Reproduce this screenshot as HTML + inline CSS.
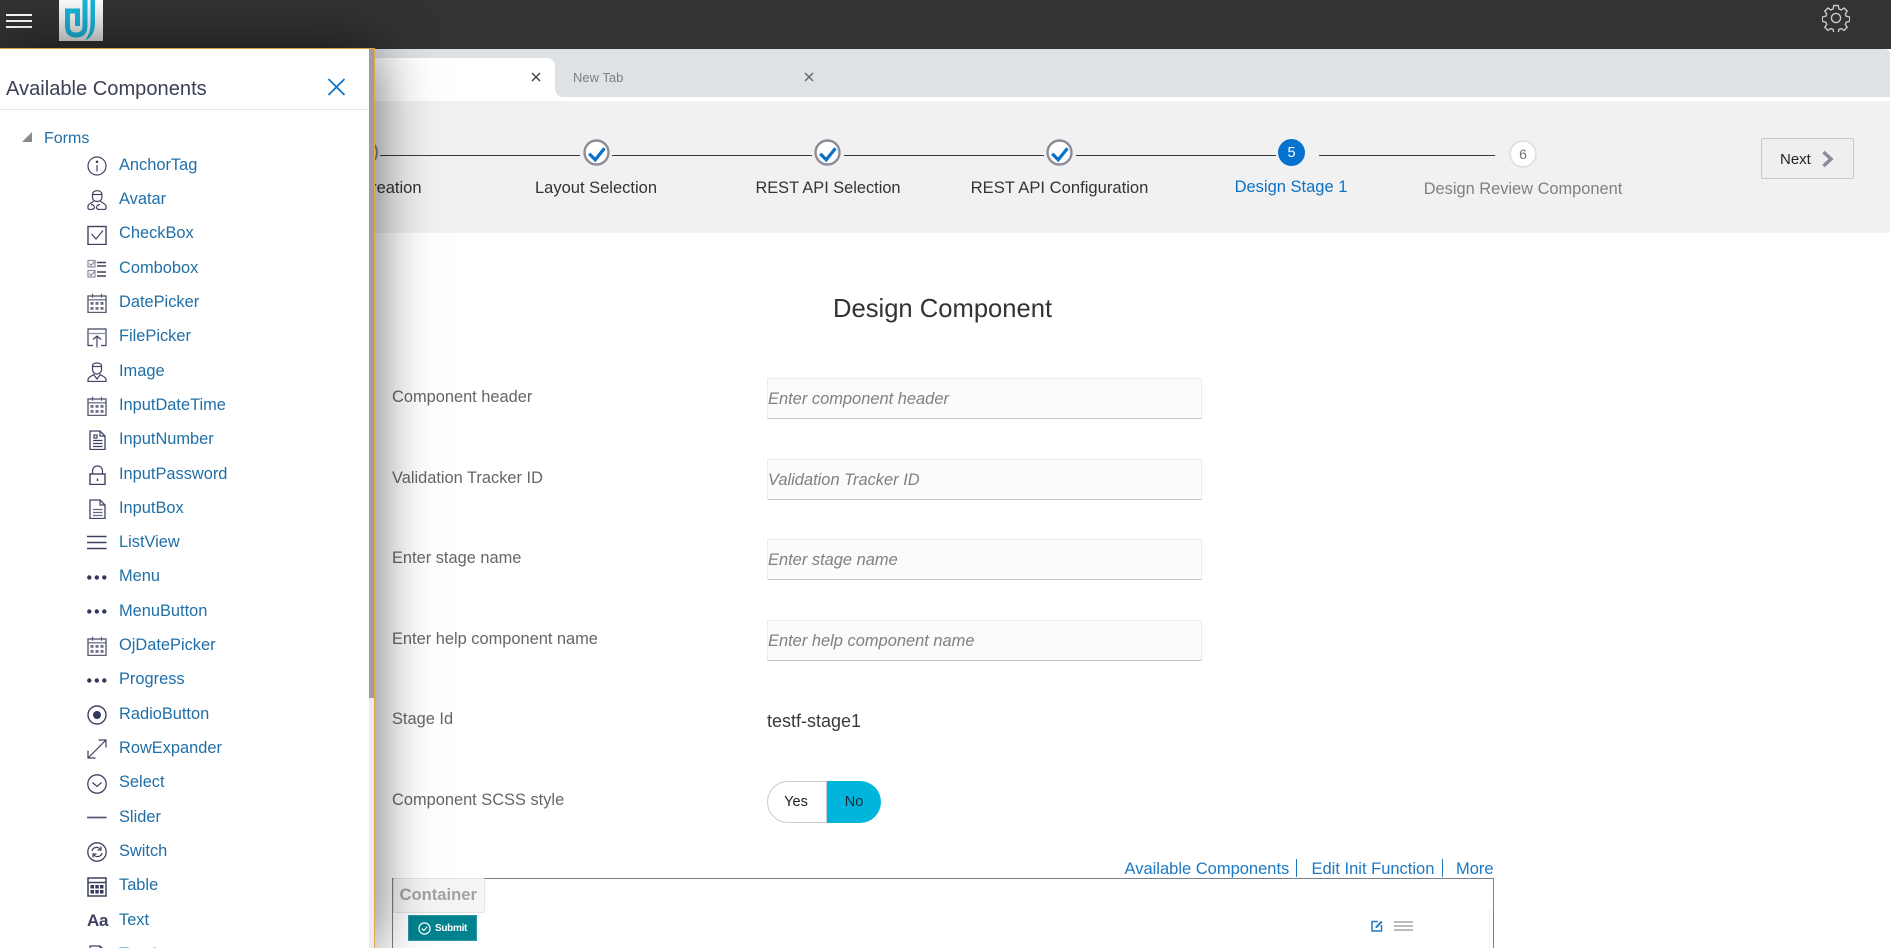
<!DOCTYPE html>
<html>
<head>
<meta charset="utf-8">
<title>Design Component</title>
<style>
html,body{margin:0;padding:0;background:#fff;width:1891px;height:948px;overflow:hidden;}
#page{width:1891px;height:948px;overflow:hidden;position:relative;font-family:"Liberation Sans",Arial,sans-serif;color:#333;}
.a{position:absolute;white-space:nowrap;}
.topbar{left:0;top:0;width:1891px;height:49px;background:#333;}
.tabbar{left:0;top:49px;width:1890px;height:48px;background:#dee1e6;border-top-right-radius:5px;}
.band{left:0;top:101px;width:1890px;height:132px;background:#f1f1f1;}
.line{height:1.4px;background:#3a3a3a;top:154.5px;}
.chk{width:27px;height:27px;top:138.5px;}
.lbl{font-size:16.5px;line-height:20px;transform:translateX(-50%);color:#333;}
.flabel{left:392px;font-size:16.4px;line-height:20px;color:#666;transform:translateY(-50%);}
.inp{left:767px;width:433px;height:39px;background:#fbfbfb;border:1px solid #ebebeb;border-bottom:1.5px solid #c6c6c6;}
.ph{left:768px;font-size:16.45px;font-style:italic;color:#808080;line-height:20px;transform:translateY(-50%);}
.link{color:#1b78c4;font-size:16.5px;line-height:20px;top:858.5px;}
.side{left:0;top:48px;width:375px;height:900px;background:#fff;border-top:1.5px solid #e2a03a;box-shadow:0 0 55px rgba(0,0,0,.6);z-index:10;overflow:hidden;}
.items{position:absolute;left:0;top:98.7px;margin:0;padding:0;list-style:none;width:369px;}
.items li{height:34.32px;line-height:34.32px;font-size:16.4px;color:#1f6fa6;position:relative;padding-left:119px;}
.items svg{position:absolute;left:87px;top:8.3px;width:20px;height:20px;fill:none;stroke:#3d4260;stroke-width:1.2;}
.aa{position:absolute;left:87px;top:1px;font-size:17px;font-weight:bold;color:#3d4260;letter-spacing:-.3px;line-height:34.32px;}
</style>
</head>
<body>
<div id="page">
<svg width="0" height="0" style="position:absolute">
<defs>
<symbol id="info" viewBox="0 0 20 20"><circle cx="10" cy="10" r="9"/><path d="M10 9v6.500"/><circle cx="10" cy="5.800" r=".7"/></symbol>
<symbol id="avatar" viewBox="0 0 20 20"><path d="M5.500 4.500c0-2.400 2-3.800 4.700-3.800s4.700 1.400 4.700 3.800v3c0 2.200-2 4-4.700 4s-4.700-1.800-4.700-4z"/><path d="M5.500 4.500h9.400"/><path d="M6.500 11c-.5 1.800-5 2.200-5.500 5v2c0 1 1 1.500 2.500 1.500s4-.5 4-2-1.500-3-3.500-3"/><path d="M13.500 11c.5 1.800 5 2.200 5.500 5v2c0 1-1 1.500-2.500 1.500h-3.500c-1.500 0-3.500-.5-3.500-2s1.500-3 3.500-3"/></symbol>
<symbol id="checkbox" viewBox="0 0 20 20"><rect x="1" y="1.500" width="18" height="18" stroke-width="1.400"/><path d="M4.500 9l4.500 5L16 5.500"/></symbol>
<symbol id="combo" viewBox="0 0 20 20"><g stroke="#8b8e9c"><rect x="1" y="1.500" width="7" height="6.500"/><rect x="1" y="11.500" width="7" height="6.500"/><path d="M2.500 4.500l1.500 2 4-4.500M2.500 14.500l1.500 2 4-4.500"/></g><path d="M10 3.500h9M10 7h9M10 13h9M10 17h9" stroke-width="1.400"/></symbol>
<symbol id="cal" viewBox="0 0 20 20"><rect x="1" y="3" width="18" height="16.500" stroke="#5a5e75" stroke-width="1.400"/><path d="M1 6.800h18M5.500 .8v4M14.500 .8v4" stroke="#5a5e75" stroke-width="1.200"/><g fill="#6a6e84" stroke="none"><rect x="3.500" y="9" width="3" height="2.800"/><rect x="8.500" y="9" width="3" height="2.800"/><rect x="13.500" y="9" width="3" height="2.800"/><rect x="3.500" y="14" width="3" height="2.800"/><rect x="8.500" y="14" width="3" height="2.800"/><rect x="13.500" y="14" width="3" height="2.800"/></g></symbol>
<symbol id="file" viewBox="0 0 20 20"><path d="M6 17.500H1V1h18v16.500h-5"/><path d="M1 5.500h18" stroke="#8b8e9c"/><path d="M10 19.500V8M6 11.500L10 8l4 3.500"/></symbol>
<symbol id="image" viewBox="0 0 20 20"><path d="M5.500 4c0-2 2-3 4.500-3s4.500 1 4.500 3v3.500c0 2.500-2 4.500-4.500 4.500s-4.500-2-4.500-4.500z"/><path d="M5.500 4.500h9"/><path d="M7 12c-.5 2-5.500 2-6 5.500v2h18v-2c-.5-3.500-5.500-3.500-6-5.500"/><path d="M7 13l3 4 3-4"/></symbol>
<symbol id="num" viewBox="0 0 20 20"><path d="M3 1h10l5 5v13.500H3z" stroke-width="1.300"/><path d="M13 1v5h5"/><rect x="7" y="5" width="3" height="3"/><path d="M6 10.500h9.500M6 13.500h9.500M6 16.500h9.500"/></symbol>
<symbol id="lock" viewBox="0 0 20 20"><rect x="3" y="9" width="15" height="10.500" stroke-width="1.400"/><path d="M5.500 9V6.500C5.500 3 7.500 1 10.500 1s5 2 5 5.500V9"/><path d="M10.500 13.500v2.500" stroke-width="1.500"/></symbol>
<symbol id="doc" viewBox="0 0 20 20"><path d="M3 1h10l5 5v13.500H3z" stroke-width="1.300"/><path d="M13 1v5h5"/><path d="M6 10.500h9.500M6 13.500h9.500M6 16.500h9.500" stroke="#666a80"/></symbol>
<symbol id="list" viewBox="0 0 20 20"><path d="M0 3.500h19.500M0 9.500h19.500M0 15.500h19.500" stroke-width="1.400"/></symbol>
<symbol id="dots" viewBox="0 0 20 20"><g fill="#33385a" stroke="none"><circle cx="2.300" cy="9.500" r="2.200"/><circle cx="9.800" cy="9.500" r="2.200"/><circle cx="17.300" cy="9.500" r="2.200"/></g></symbol>
<symbol id="radio" viewBox="0 0 20 20"><circle cx="10" cy="10" r="9" stroke-width="1.400"/><circle cx="10" cy="10" r="4" fill="#33385a" stroke="none"/></symbol>
<symbol id="exp" viewBox="0 0 20 20"><path d="M1 19L18.500 1.500M11.500 1h7.500v7.500M1 11.500V19h7.500"/></symbol>
<symbol id="sel" viewBox="0 0 20 20"><circle cx="10" cy="10" r="9.200" stroke-width="1.300"/><path d="M5.500 8.500l4.500 4 4.500-4"/></symbol>
<symbol id="sld" viewBox="0 0 20 20"><path d="M0 9.500h19.500" stroke="#555a75" stroke-width="1.800"/></symbol>
<symbol id="sw" viewBox="0 0 20 20"><circle cx="10" cy="10" r="9.200" stroke-width="1.300"/><path d="M5 9c.5-3 4-4.500 7-3l1.500 1.500M15 11c-.5 3-4 4.500-7 3l-1.500-1.500"/><path d="M14 4.500v3.500h-3.500M6 15.500V12h3.500"/></symbol>
<symbol id="tbl" viewBox="0 0 20 20"><rect x="1" y="1" width="18" height="18" stroke-width="1.500"/><path d="M1 5.500h18" stroke-width="1.500"/><g fill="#33385a" stroke="none"><rect x="3.500" y="8" width="3.500" height="3.500"/><rect x="8.300" y="8" width="3.500" height="3.500"/><rect x="13" y="8" width="3.500" height="3.500"/><rect x="3.500" y="13" width="3.500" height="3.500"/><rect x="8.300" y="13" width="3.500" height="3.500"/><rect x="13" y="13" width="3.500" height="3.500"/></g></symbol>
</defs>
</svg>

<div class="a topbar"></div>
<!-- hamburger -->
<div class="a" style="left:5.500px;top:13.500px;width:26px;height:2.300px;background:#fff"></div>
<div class="a" style="left:5.500px;top:19.500px;width:26px;height:2.300px;background:#fff"></div>
<div class="a" style="left:5.500px;top:26px;width:26px;height:2.300px;background:#fff"></div>
<!-- logo -->
<svg class="a" style="left:59px;top:0" width="44" height="41" viewBox="59 0 44 41">
<defs><linearGradient id="lg" x1="0" y1="0" x2="0" y2="1"><stop offset="0" stop-color="#fff"/><stop offset="1" stop-color="#e6e6e6"/></linearGradient></defs>
<rect x="59" y="0" width="44" height="41" fill="url(#lg)"/>
<path d="M77.500 26V11H67.500V26Q67.500 35 76 35Q85 35 85 26V0" fill="none" stroke="#19b5dc" stroke-width="5"/>
<path d="M90.500 0h4.500V23C95 32 91 38 85 40.500 89 35 90.500 30 90.500 23z" fill="#19b5dc"/>
</svg>
<!-- gear -->
<svg class="a" style="left:1822px;top:4px" width="28" height="28" viewBox="0 0 28 28" fill="none" stroke="#c9c9c9" stroke-width="1.400">
<circle cx="14" cy="14" r="4.600"/>
<path d="M11.800 1.500h4.400l.7 3.400 2.300 1 2.900-1.900 3.100 3.100-1.900 2.900 1 2.300 3.400.7v4.400l-3.400.7-1 2.300 1.900 2.900-3.100 3.100-2.900-1.900-2.300 1-.7 3.400h-4.400l-.7-3.400-2.300-1-2.900 1.900-3.100-3.100 1.900-2.900-1-2.300-3.400-.7v-4.400l3.400-.7 1-2.300-1.900-2.900 3.100-3.100 2.900 1.900 2.300-1z"/>
</svg>

<!-- tabs -->
<div class="a tabbar"></div>
<div class="a" style="left:300px;top:58px;width:255px;height:39px;background:#fff;border-top-right-radius:8px"></div>
<div class="a" style="left:555px;top:87px;width:12px;height:10px;background:#fff"></div>
<div class="a" style="left:555px;top:87px;width:12px;height:10px;background:#dee1e6;border-bottom-left-radius:8px"></div>
<svg class="a" style="left:531px;top:72px" width="10" height="10" viewBox="0 0 10 10"><path d="M1 1l8 8M9 1l-8 8" stroke="#444" stroke-width="1.400"/></svg>
<div class="a" style="left:573px;top:70px;font-size:13px;line-height:16px;color:#808080">New Tab</div>
<svg class="a" style="left:804px;top:72px" width="10" height="10" viewBox="0 0 10 10"><path d="M1 1l8 8M9 1l-8 8" stroke="#666" stroke-width="1.400"/></svg>

<!-- stepper -->
<div class="a band"></div>
<div class="a" style="left:340px;top:138.500px;width:39px;height:27px;overflow:hidden"><div style="position:absolute;left:11px;top:0;width:27px;height:27px;box-sizing:border-box;border:2.500px solid #8a8d97;border-radius:50%;background:#fff"></div></div>
<div class="a line" style="left:380px;width:200px"></div>
<div class="a line" style="left:612px;width:200px"></div>
<div class="a line" style="left:844px;width:200px"></div>
<div class="a line" style="left:1076px;width:200px"></div>
<div class="a line" style="left:1319px;width:176px"></div>

<svg class="a chk" style="left:582.500px" viewBox="0 0 27 27"><circle cx="13.500" cy="13.500" r="12" fill="#fff" stroke="#8a8d97" stroke-width="2.400"/><path d="M6.200 14.800l6 6 9.300-11.600" fill="none" stroke="#0a72c6" stroke-width="3.200"/></svg>
<svg class="a chk" style="left:814px" viewBox="0 0 27 27"><circle cx="13.500" cy="13.500" r="12" fill="#fff" stroke="#8a8d97" stroke-width="2.400"/><path d="M6.200 14.800l6 6 9.300-11.600" fill="none" stroke="#0a72c6" stroke-width="3.200"/></svg>
<svg class="a chk" style="left:1046px" viewBox="0 0 27 27"><circle cx="13.500" cy="13.500" r="12" fill="#fff" stroke="#8a8d97" stroke-width="2.400"/><path d="M6.200 14.800l6 6 9.300-11.600" fill="none" stroke="#0a72c6" stroke-width="3.200"/></svg>
<div class="a" style="left:1278px;top:139px;width:27px;height:27px;border-radius:50%;background:#0572ce;color:#fff;text-align:center;font-size:14.500px;line-height:28.500px">5</div>
<div class="a" style="left:1509px;top:139.500px;width:24px;height:24px;border:2px solid #e2e2e2;border-radius:50%;background:#fff;color:#777;text-align:center;font-size:14px;line-height:24px">6</div>

<div class="a lbl" style="left:366.500px;top:177.500px"><span>Stage Creation</span></div>
<div class="a lbl" style="left:596px;top:177.500px">Layout Selection</div>
<div class="a lbl" style="left:828px;top:177.500px;font-size:16.350px">REST API Selection</div>
<div class="a lbl" style="left:1059.500px;top:177.500px;font-size:16.600px">REST API Configuration</div>
<div class="a lbl" style="left:1291px;top:177px;color:#0a72c6">Design Stage 1</div>
<div class="a lbl" style="left:1523px;top:178.500px;color:#808080;font-size:16.400px">Design Review Component</div>

<!-- next -->
<div class="a" style="left:1761px;top:138px;width:91px;height:39px;border:1px solid #c8c8c8;border-radius:2px;background:#efefef"></div>
<div class="a" style="left:1780px;top:150.500px;font-size:15px;line-height:18px;color:#222">Next</div>
<svg class="a" style="left:1821px;top:150px" width="14" height="18" viewBox="0 0 14 18"><path d="M2.500 2L10 9 2.500 16" fill="none" stroke="#8a8d97" stroke-width="3.500"/></svg>

<!-- form -->
<div class="a" style="left:833px;top:292.500px;font-size:25.600px;line-height:33px;color:#333">Design Component</div>

<div class="a flabel" style="top:396.700px">Component header</div>
<div class="a flabel" style="top:477.500px">Validation Tracker ID</div>
<div class="a flabel" style="top:557.700px">Enter stage name</div>
<div class="a flabel" style="top:638.700px">Enter help component name</div>
<div class="a flabel" style="top:718.700px">Stage Id</div>
<div class="a flabel" style="top:800px">Component SCSS style</div>

<div class="a inp" style="top:378px"></div>
<div class="a inp" style="top:459px"></div>
<div class="a inp" style="top:539px"></div>
<div class="a inp" style="top:620px"></div>
<div class="a ph" style="top:398.500px">Enter component header</div>
<div class="a ph" style="top:479.500px">Validation Tracker ID</div>
<div class="a ph" style="top:559.500px">Enter stage name</div>
<div class="a ph" style="top:640.500px">Enter help component name</div>

<div class="a" style="left:767px;top:709.500px;font-size:18px;line-height:22px;color:#3a3a3a">testf-stage1</div>

<div class="a" style="left:767px;top:781px;width:56px;height:40px;padding-right:2px;border:1px solid #ccc;border-radius:21px 0 0 21px;background:#fff;text-align:center;font-size:14.500px;line-height:41.500px;color:#222">Yes</div>
<div class="a" style="left:827px;top:781px;width:54px;height:42px;border-radius:0 21px 21px 0;background:#00b5dc;text-align:center;font-size:14.500px;line-height:42.500px;color:#1b2b3a">No</div>

<!-- links -->
<div class="a link" style="left:1124.500px">Available Components</div>
<div class="a" style="left:1296px;top:859px;width:1px;height:18px;background:#1b78c4"></div>
<div class="a link" style="left:1311.500px">Edit Init Function</div>
<div class="a" style="left:1442px;top:859px;width:1px;height:18px;background:#1b78c4"></div>
<div class="a link" style="left:1456px">More</div>

<!-- container -->
<div class="a" style="left:392px;top:878px;width:1100px;height:100px;border:1px solid #7a7f8c"></div>
<div class="a" style="left:392.500px;top:878px;width:90px;height:33px;background:#f5f5f5;border:1px solid #e4e4e4;border-radius:2px"></div>
<div class="a" style="left:399.500px;top:885px;font-size:16.600px;font-weight:bold;line-height:20px;color:#a3a3a3">Container</div>
<div class="a" style="left:408px;top:915px;width:67px;height:24px;background:#00838f;border:1px solid #2a96a2"></div>
<svg class="a" style="left:418px;top:921.500px" width="13" height="13" viewBox="0 0 13 13" fill="none" stroke="#fff" stroke-width="1.200"><circle cx="6.500" cy="6.500" r="5.600"/><path d="M3.800 6.500l2 2 3.500-3.800"/></svg>
<div class="a" style="left:435px;top:921.500px;font-size:10px;font-weight:bold;letter-spacing:-.3px;line-height:14px;color:#fff">Submit</div>
<div class="a" style="left:1489px;top:908px;width:1px;height:40px;background:#eee"></div>
<svg class="a" style="left:1371px;top:920px" width="12" height="12" viewBox="0 0 12 12"><path d="M7 1.500H1v9.500h9.500V5" fill="none" stroke="#1f7fc4" stroke-width="1.500"/><path d="M4.500 6.500L10 .8l1.500 1.500L6 8H4.500z" fill="#1f7fc4"/></svg>
<div class="a" style="left:1393.500px;top:920.500px;width:19px;height:2px;background:#bbb"></div>
<div class="a" style="left:1393.500px;top:924.500px;width:19px;height:2px;background:#bbb"></div>
<div class="a" style="left:1393.500px;top:928.500px;width:19px;height:2px;background:#bbb"></div>

<!-- sidebar -->
<div class="a side">
  <div class="a" style="left:6px;top:27px;font-size:20.100px;line-height:26px;color:#3a3f55">Available Components</div>
  <svg class="a" style="left:327px;top:29px" width="19" height="18" viewBox="0 0 19 18"><path d="M1.500 1l16 16M17.500 1l-16 16" stroke="#0a72c6" stroke-width="1.700" fill="none"/></svg>
  <div class="a" style="left:0;top:60px;width:369px;height:1px;background:#e6e6e6"></div>
  <svg class="a" style="left:22px;top:82.500px" width="10" height="10" viewBox="0 0 10 10"><path d="M10 0v10H0z" fill="#8a8a8a"/></svg>
  <div class="a" style="left:44px;top:79.500px;font-size:16px;line-height:20px;color:#1f6fa6">Forms</div>
  <ul class="items">
    <li><svg><use href="#info"/></svg>AnchorTag</li>
    <li><svg><use href="#avatar"/></svg>Avatar</li>
    <li><svg><use href="#checkbox"/></svg>CheckBox</li>
    <li><svg><use href="#combo"/></svg>Combobox</li>
    <li><svg><use href="#cal"/></svg>DatePicker</li>
    <li><svg><use href="#file"/></svg>FilePicker</li>
    <li><svg><use href="#image"/></svg>Image</li>
    <li><svg><use href="#cal"/></svg>InputDateTime</li>
    <li><svg><use href="#num"/></svg>InputNumber</li>
    <li><svg><use href="#lock"/></svg>InputPassword</li>
    <li><svg><use href="#doc"/></svg>InputBox</li>
    <li><svg><use href="#list"/></svg>ListView</li>
    <li><svg><use href="#dots"/></svg>Menu</li>
    <li><svg><use href="#dots"/></svg>MenuButton</li>
    <li><svg><use href="#cal"/></svg>OjDatePicker</li>
    <li><svg><use href="#dots"/></svg>Progress</li>
    <li><svg><use href="#radio"/></svg>RadioButton</li>
    <li><svg><use href="#exp"/></svg>RowExpander</li>
    <li><svg><use href="#sel"/></svg>Select</li>
    <li><svg><use href="#sld"/></svg>Slider</li>
    <li><svg><use href="#sw"/></svg>Switch</li>
    <li><svg><use href="#tbl"/></svg>Table</li>
    <li><span class="aa">Aa</span>Text</li>
    <li><svg><use href="#doc"/></svg>TextArea</li>
  </ul>
  <div class="a" style="left:369px;top:0;width:5px;height:900px;background:#ececec"></div>
  <div class="a" style="left:369px;top:0;width:5px;height:649px;background:#9d9d9d"></div>
  <div class="a" style="left:374px;top:0;width:1.300px;height:900px;background:#e2a84a"></div>
</div>
</div>
</body>
</html>
